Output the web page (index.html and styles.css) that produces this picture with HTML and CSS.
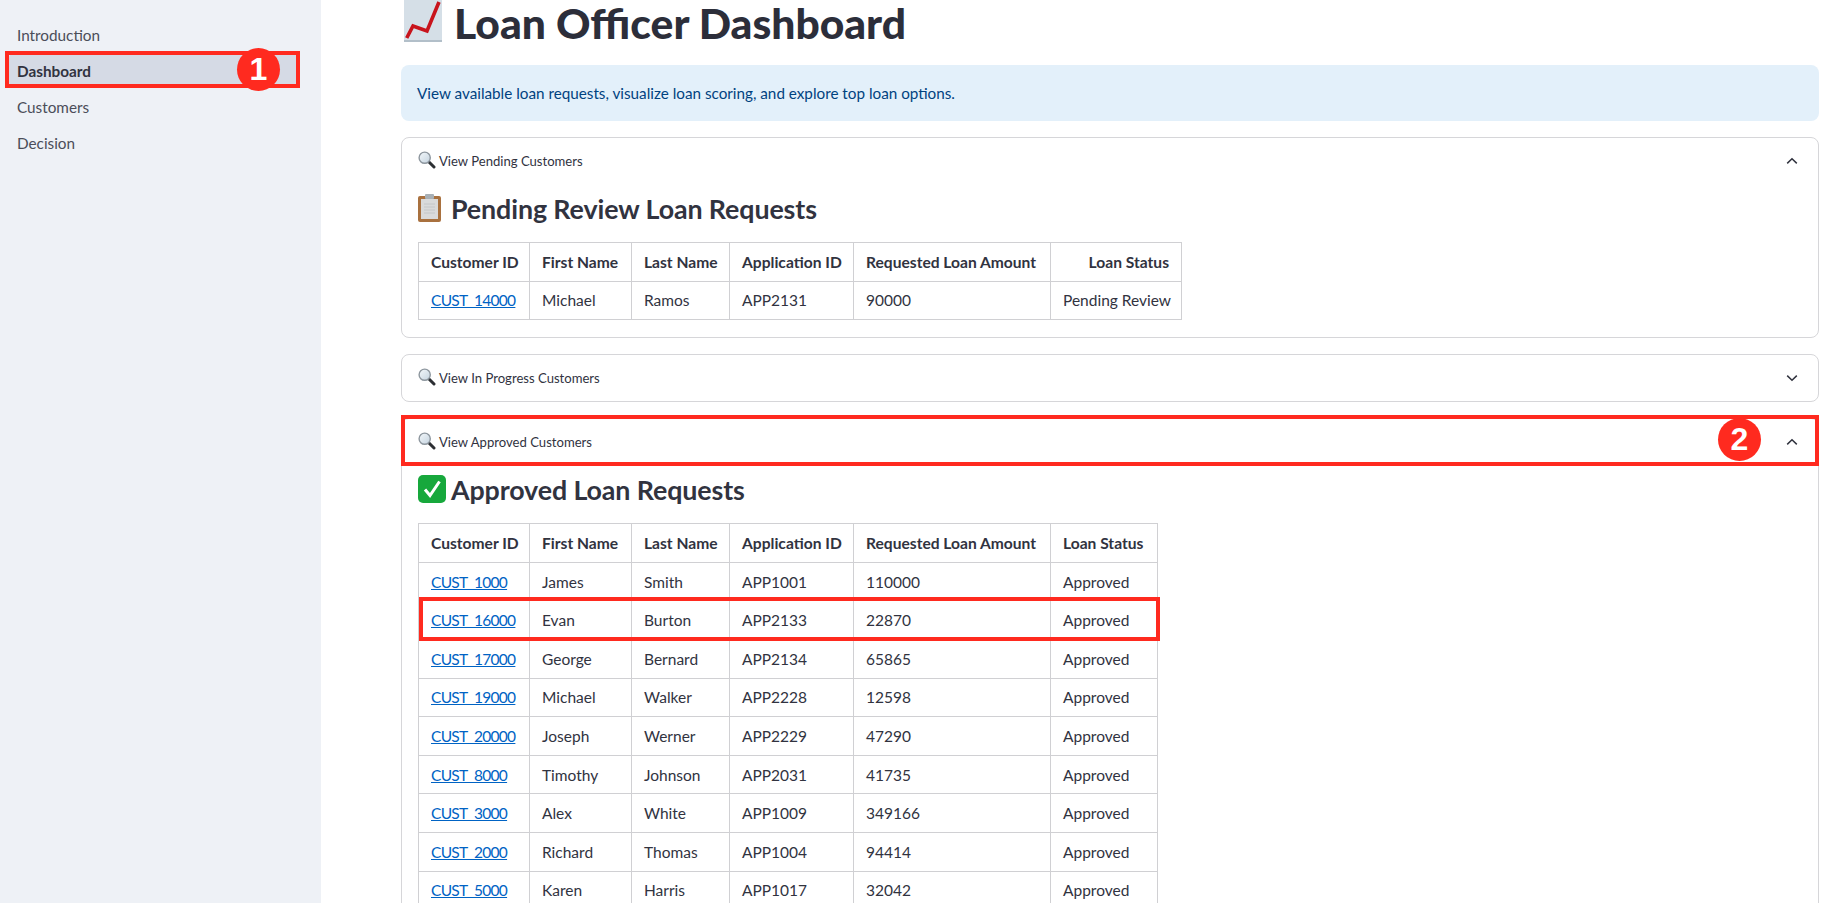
FILE: index.html
```html
<!DOCTYPE html>
<html lang="en">
<head>
<meta charset="utf-8">
<title>Loan Officer Dashboard</title>
<link rel="stylesheet" href="styles.css">
</head>
<body>
<svg class="defs" width="0" height="0" aria-hidden="true">
  <defs>
    <linearGradient id="lens" x1="0" y1="0" x2="1" y2="1"><stop offset="0" stop-color="#f4f8fb"/><stop offset="1" stop-color="#c4d3df"/></linearGradient>
    <symbol id="mag" viewBox="0 0 18 18">
      <path d="M10.5 10.5 16 16" stroke="#2c2f33" stroke-width="3" stroke-linecap="round"/>
      <circle cx="6.7" cy="6.7" r="5.6" fill="url(#lens)" stroke="#8d969e" stroke-width="1.4"/>
    </symbol>
    <symbol id="up" viewBox="0 0 12 8"><path d="M1.2 6.4 6 1.8l4.8 4.6" fill="none" stroke="#31333f" stroke-width="1.5"/></symbol>
    <symbol id="down" viewBox="0 0 12 8"><path d="M1.2 1.6 6 6.2l4.8-4.6" fill="none" stroke="#31333f" stroke-width="1.5"/></symbol>
  </defs>
</svg>
<div class="app">
  <nav class="sidebar">
    <a class="nav-item">Introduction</a>
    <a class="nav-item active">Dashboard</a>
    <a class="nav-item">Customers</a>
    <a class="nav-item">Decision</a>
  </nav>
  <main class="main">
    <h1 class="title">
      <svg class="ico-chart" viewBox="0 0 38 42"><rect width="38" height="42" fill="#d5dfe7"/><path d="M0 41h38" stroke="#b2bfc9" stroke-width="2"/><path d="M2.700 38 9 26l14 5L35 2" fill="none" stroke="#c8141c" stroke-width="3.600"/></svg>
      <span>Loan Officer Dashboard</span>
    </h1>
    <div class="alert">View available loan requests, visualize loan scoring, and explore top loan options.</div>

    <section class="expander">
      <div class="summary"><svg class="ico-mag"><use href="#mag"/></svg><span class="label">View Pending Customers</span><svg class="chev"><use href="#up"/></svg></div>
      <h3 class="sub">
        <svg class="ico-clip" viewBox="0 0 23 28"><rect y="2" width="23" height="26" rx="2" fill="#a9713f"/><rect x="3" y="5" width="17" height="20" fill="#d9dadb"/><path d="M6 10h11M6 13h11M6 16h11M6 19h11" stroke="#c4c6c8"/><rect x="7" width="9" height="5" rx="1" fill="#a8b0b6"/></svg>
        <span>Pending Review Loan Requests</span>
      </h3>
      <table class="grid grid-pending">
        <colgroup><col class="c1"><col class="c2"><col class="c3"><col class="c4"><col class="c5"><col class="c6"></colgroup>
        <thead><tr><th>Customer ID</th><th>First Name</th><th>Last Name</th><th>Application ID</th><th>Requested Loan Amount</th><th class="right">Loan Status</th></tr></thead>
        <tbody><tr><td><a href="#">CUST_14000</a></td><td>Michael</td><td>Ramos</td><td>APP2131</td><td>90000</td><td>Pending Review</td></tr></tbody>
      </table>
    </section>

    <section class="expander closed">
      <div class="summary"><svg class="ico-mag"><use href="#mag"/></svg><span class="label">View In Progress Customers</span><svg class="chev"><use href="#down"/></svg></div>
    </section>

    <section class="expander last">
      <div class="summary"><svg class="ico-mag"><use href="#mag"/></svg><span class="label">View Approved Customers</span><svg class="chev"><use href="#up"/></svg></div>
      <h3 class="sub">
        <svg class="ico-check" viewBox="0 0 28 28"><rect width="28" height="28" rx="5" fill="#17a83c"/><path d="M7 14.500l5 6L21.500 6.500" fill="none" stroke="#fff" stroke-width="3"/></svg>
        <span>Approved Loan Requests</span>
      </h3>
      <table class="grid grid-approved">
        <colgroup><col class="c1"><col class="c2"><col class="c3"><col class="c4"><col class="c5"><col class="c6b"></colgroup>
        <thead><tr><th>Customer ID</th><th>First Name</th><th>Last Name</th><th>Application ID</th><th>Requested Loan Amount</th><th>Loan Status</th></tr></thead>
        <tbody>
          <tr><td><a href="#">CUST_1000</a></td><td>James</td><td>Smith</td><td>APP1001</td><td>110000</td><td>Approved</td></tr>
          <tr><td><a href="#">CUST_16000</a></td><td>Evan</td><td>Burton</td><td>APP2133</td><td>22870</td><td>Approved</td></tr>
          <tr><td><a href="#">CUST_17000</a></td><td>George</td><td>Bernard</td><td>APP2134</td><td>65865</td><td>Approved</td></tr>
          <tr><td><a href="#">CUST_19000</a></td><td>Michael</td><td>Walker</td><td>APP2228</td><td>12598</td><td>Approved</td></tr>
          <tr><td><a href="#">CUST_20000</a></td><td>Joseph</td><td>Werner</td><td>APP2229</td><td>47290</td><td>Approved</td></tr>
          <tr><td><a href="#">CUST_8000</a></td><td>Timothy</td><td>Johnson</td><td>APP2031</td><td>41735</td><td>Approved</td></tr>
          <tr><td><a href="#">CUST_3000</a></td><td>Alex</td><td>White</td><td>APP1009</td><td>349166</td><td>Approved</td></tr>
          <tr><td><a href="#">CUST_2000</a></td><td>Richard</td><td>Thomas</td><td>APP1004</td><td>94414</td><td>Approved</td></tr>
          <tr><td><a href="#">CUST_5000</a></td><td>Karen</td><td>Harris</td><td>APP1017</td><td>32042</td><td>Approved</td></tr>
        </tbody>
      </table>
    </section>
  </main>
</div>
<div class="mark box-nav"></div>
<div class="mark box-exp"></div>
<div class="mark box-row"></div>
<div class="badge badge-1">1</div>
<div class="badge badge-2">2</div>
</body>
</html>
```

FILE: styles.css
```css
* { box-sizing: border-box; }
html, body { margin: 0; height: 100%; overflow: hidden; }
body { position: relative; background: #fff; color: #31333f; font-family: "Lato", "Noto Sans", sans-serif; font-size: 15px; }
.defs { position: absolute; }
.app { display: flex; height: 903px; overflow: hidden; }

.sidebar { flex: 0 0 321px; background: #eef1f6; padding: 18px 24px 0 9px; display: flex; flex-direction: column; gap: 3px; }
.nav-item { display: flex; align-items: center; height: 33px; padding-left: 8px; border-radius: 4px; color: #4b4d59; font-size: 15.300px; }
.nav-item.active { background: #d5dae5; color: #31333f; font-weight: 700; }

.main { flex: 1; min-width: 0; padding: 0 28px 0 80px; }
.title { margin: 0; height: 65px; display: flex; align-items: flex-start; gap: 12px; padding-left: 3px; font-size: 42.600px; line-height: 45px; font-weight: 900; color: #2c2e3a; }
.ico-chart { width: 38px; height: 42px; flex: none; }

.alert { height: 56px; display: flex; align-items: center; padding: 0 16px; margin-bottom: 16px; border-radius: 8px; background: #e3f0fa; color: #004280; font-size: 15.250px; }

.expander { border: 1px solid #d6d6d9; border-radius: 8px; margin-bottom: 16px; padding: 0 16px 17px; }
.expander.closed { padding-bottom: 0; }
.expander.last { height: 600px; margin: 0; }
.summary { display: flex; align-items: center; height: 46px; }
.ico-mag { width: 18px; height: 18px; flex: none; margin-top: -2px; }
.label { margin-left: 3px; font-size: 13.100px; flex: 1; }
.chev { width: 12px; height: 8px; flex: none; margin-right: 4px; }

.sub { margin: 0 0 8px; height: 50px; display: flex; align-items: center; gap: 10px; font-size: 26.800px; font-weight: 700; letter-spacing: -0.1px; }
.ico-clip { width: 23px; height: 28px; flex: none; margin-top: -2px; }
.ico-check { width: 28px; height: 28px; flex: none; margin-right: -5px; margin-top: -2px; }

.grid { border-collapse: collapse; table-layout: fixed; font-size: 15.500px; }
.grid-pending { width: 763px; }
.grid-approved { width: 739px; }
.c1 { width: 111px; }
.c2 { width: 102px; }
.c3 { width: 98px; }
.c4 { width: 124px; }
.c5 { width: 197px; }
.c6 { width: 131px; }
.c6b { width: 107px; }
.grid tr { height: 38.600px; }
.grid th, .grid td { border: 1px solid #d0d0d3; padding: 0 12px; text-align: left; white-space: nowrap; }
.grid th { font-weight: 700; font-size: 15.600px; }
.grid th.right { text-align: right; }
.grid a { color: #0063c4; letter-spacing: -0.7px; }

.mark { position: absolute; border: 4px solid #ff2a1f; }
.box-nav { left: 5px; top: 51px; width: 295px; height: 37px; }
.box-exp { left: 401px; top: 415px; width: 1418px; height: 51px; }
.box-row { left: 419px; top: 597px; width: 741px; height: 44px; }
.badge { position: absolute; width: 43px; height: 43px; border-radius: 50%; background: #ff2a1f; color: #fff; font-family: "Liberation Sans", sans-serif; font-weight: 700; font-size: 32px; line-height: 43px; text-align: center; }
.badge-1 { left: 237px; top: 48px; }
.badge-2 { left: 1718px; top: 418px; }
```
